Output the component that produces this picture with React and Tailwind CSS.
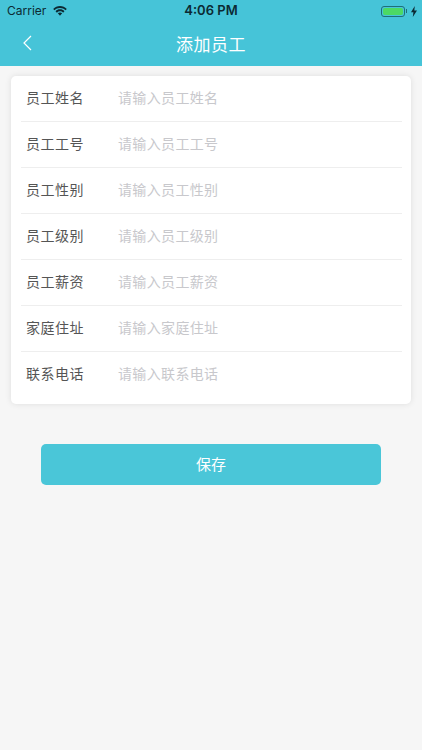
const fields = [
    ['员工姓名', '请输入员工姓名'],
    ['员工工号', '请输入员工工号'],
    ['员工性别', '请输入员工性别'],
    ['员工级别', '请输入员工级别'],
    ['员工薪资', '请输入员工薪资'],
    ['家庭住址', '请输入家庭住址'],
    ['联系电话', '请输入联系电话'],
]

function StatusBar() {
    return (
        <div className="h-[22px] flex items-center justify-between pl-[7px] pr-[5px] text-[#0c2a33] relative">
            <div className="flex items-center gap-[7px]">
                <span className="text-[12px] font-['Inter',sans-serif]">Carrier</span>
                <svg width="14" height="10" viewBox="0 0 15 11" fill="#0c2a33">
                    <path d="M7.500 0C4.600 0 2 1.100 0 3.200l1.500 1.600C3 3.200 5.100 2.300 7.500 2.300s4.500.9 6 2.500L15 3.200C13 1.100 10.400 0 7.500 0z" />
                    <path d="M7.500 3.700c-1.900 0-3.600.7-4.900 2L4.100 7.300c.9-.9 2.100-1.400 3.400-1.400s2.500.5 3.400 1.400l1.500-1.600c-1.300-1.300-3-2-4.900-2z" />
                    <path d="M7.500 7.100c-.9 0-1.700.3-2.400 1l2.400 2.600 2.400-2.600c-.7-.7-1.500-1-2.400-1z" />
                </svg>
            </div>
            <span className="absolute left-0 right-0 text-center text-[13px] font-semibold font-['Inter',sans-serif]">4:06 PM</span>
            <div className="flex items-center gap-[4px]">
                <div className="flex items-center gap-[1px]">
                    <div className="w-[24px] h-[11px] rounded-[3px] border border-[#1f6f78] p-[1px]">
                        <div className="w-full h-full rounded-[2px] bg-[#4cd964]" />
                    </div>
                    <div className="w-[1px] h-[4px] bg-[#1f6f78]" />
                </div>
                <svg width="6" height="11" viewBox="0 0 6 11" fill="#0c2a33">
                    <path d="M3.800 0L0 6.200h2.400L1.800 11 6 4.500H3.300z" />
                </svg>
            </div>
        </div>
    )
}

export default function App() {
    return (
        <div className="min-h-[750px] bg-[#f6f6f6] font-['Noto_Sans_CJK_SC','Inter',sans-serif]">
            <header className="h-[66px] bg-[#46c4d8]">
                <StatusBar />
                <div className="relative h-[44px] flex items-center justify-center">
                    <svg className="absolute left-[22px] top-[13px]" width="11" height="16" viewBox="0 0 11 16" fill="none" stroke="#fff" strokeWidth="1.200">
                        <path d="M9 1 2 8l7 7" />
                    </svg>
                    <h1 className="text-[17px] font-normal text-white tracking-[0.5px] pb-[1px]">添加员工</h1>
                </div>
            </header>

            <div className="mx-[11px] mt-[10px] bg-white rounded-[5px] shadow-[0_0_6px_rgba(0,0,0,0.1)] pl-[10px] pr-[9px] pb-[6px]">
                {fields.map(([label, hint], i) => (
                    <div
                        key={label}
                        className={`h-[46px] flex items-center pb-[2px] border-b ${i < fields.length - 1 ? 'border-[#eeeeee]' : 'border-transparent'}`}
                    >
                        <span className="w-[5px]" />
                        <span className="w-[92px] text-[14px] text-[#555555] tracking-[0.5px]">{label}</span>
                        <span className="text-[14px] text-[#c8c8cc] tracking-[0.35px]">{hint}</span>
                    </div>
                ))}
            </div>

            <div className="mx-[41px] mt-[40px] h-[41px] bg-[#4ac6d8] rounded-[5px] flex items-center justify-center text-[15px] text-white pb-[1px]">
                保存
            </div>
        </div>
    )
}
